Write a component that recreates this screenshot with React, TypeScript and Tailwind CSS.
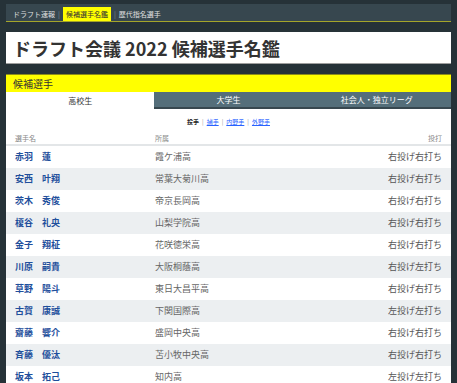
const players = [
  { sei: "赤羽", mei: "蓮", school: "霞ケ浦高", bt: "右投げ右打ち" },
  { sei: "安西", mei: "叶翔", school: "常葉大菊川高", bt: "右投げ右打ち" },
  { sei: "茨木", mei: "秀俊", school: "帝京長岡高", bt: "右投げ右打ち" },
  { sei: "榎谷", mei: "礼央", school: "山梨学院高", bt: "右投げ右打ち" },
  { sei: "金子", mei: "翔柾", school: "花咲徳栄高", bt: "右投げ右打ち" },
  { sei: "川原", mei: "嗣貴", school: "大阪桐蔭高", bt: "右投げ左打ち" },
  { sei: "草野", mei: "陽斗", school: "東日大昌平高", bt: "右投げ右打ち" },
  { sei: "古賀", mei: "康誠", school: "下関国際高", bt: "左投げ左打ち" },
  { sei: "齋藤", mei: "響介", school: "盛岡中央高", bt: "右投げ右打ち" },
  { sei: "斉藤", mei: "優汰", school: "苫小牧中央高", bt: "右投げ右打ち" },
  { sei: "坂本", mei: "拓己", school: "知内高", bt: "左投げ左打ち" },
];

export default function App() {
  return (
    <div className="w-[457px] h-[383px] overflow-hidden bg-[#263238] px-[6px] pt-[4px] font-['Noto_Sans_CJK_JP',sans-serif]">
      {/* Top nav */}
      <nav className="h-[18px] bg-[#37474f] border-b border-[#a5a52a] flex items-end pl-[7px] text-[7px] text-[#e0e0e0]">
        <span className="h-[14px] flex items-center">ドラフト速報</span>
        <span className="h-[14px] flex items-center px-[3px] text-[#78909c]">|</span>
        <span className="h-[14px] flex items-center bg-[#ffff00] text-[#333] px-[3px]">候補選手名鑑</span>
        <span className="h-[14px] flex items-center px-[3px] text-[#78909c]">|</span>
        <span className="h-[14px] flex items-center">歴代指名選手</span>
      </nav>

      {/* Title */}
      <div className="mt-[10px] h-[32px] bg-white border-b border-[#9e9e9e] flex items-center pl-[7px]">
        <h1 className="text-[18px] font-bold text-[#333] leading-none">ドラフト会議 2022 候補選手名鑑</h1>
      </div>

      {/* Section */}
      <div className="mt-[10px] bg-white">
        <div className="h-[18px] bg-[#ffff00] border-t border-[#8c8c1a] flex items-center pl-[7px] text-[10px] text-[#333]">
          候補選手
        </div>
        <div className="grid grid-cols-3 h-[17px] text-[8px]">
          <div className="flex items-center justify-center bg-white text-[#333]">高校生</div>
          <div className="flex items-center justify-center bg-[#546e7a] border-b-2 border-[#37474f] text-white">大学生</div>
          <div className="flex items-center justify-center bg-[#546e7a] border-b-2 border-[#37474f] text-white">社会人・独立リーグ</div>
        </div>

        <div className="h-[23px] flex items-center justify-center gap-[3px] text-[6px] pt-[2px]">
          <span className="font-bold text-[#222]">投手</span>
          <span className="text-[#999]">|</span>
          <a href="#" className="text-[#2962ff] underline">捕手</a>
          <span className="text-[#999]">|</span>
          <a href="#" className="text-[#2962ff] underline">内野手</a>
          <span className="text-[#999]">|</span>
          <a href="#" className="text-[#2962ff] underline">外野手</a>
        </div>

        <div className="grid grid-cols-[140px_1fr_auto] px-[9px] h-[14px] items-center text-[7px] text-[#888] border-b-2 border-[#e3e6e8]">
          <span>選手名</span>
          <span>所属</span>
          <span>投打</span>
        </div>

        {players.map((p, i) => (
          <div
            key={p.sei + p.mei}
            className={`grid grid-cols-[140px_1fr_auto] px-[9px] h-[22px] items-center text-[9px] ${i % 2 === 1 ? "bg-[#eceff1]" : "bg-white"}`}
          >
            <span className="font-bold text-[#1f4f9c]">{p.sei}　{p.mei}</span>
            <span className="text-[#666]">{p.school}</span>
            <span className="text-[#555]">{p.bt}</span>
          </div>
        ))}
      </div>
    </div>
  );
}
